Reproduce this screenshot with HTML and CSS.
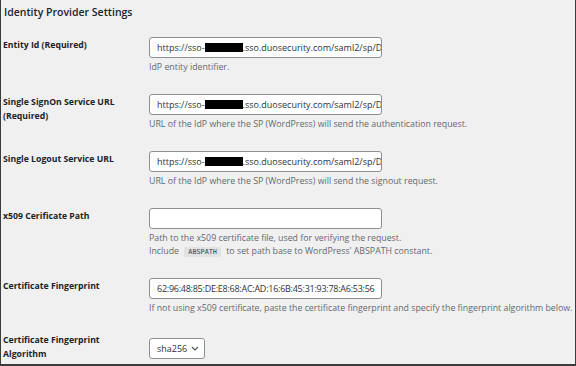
FILE: index.html
```html
<!DOCTYPE html>
<html lang="en">
<head>
    <meta charset="UTF-8">
    <meta name="viewport" content="width=device-width, initial-scale=1.0">
    <title>Identity Provider Settings</title>
    <link rel="stylesheet" href="styles.css">
</head>
<body>
    <div class="frame">
        <h2 class="section-title">Identity Provider Settings</h2>

        <div class="form-table">
            <div class="form-row">
                <div class="form-label">Entity Id (Required)</div>
                <div class="form-field">
                    <div class="text-input">https://sso-<span class="redacted"></span>.sso.duosecurity.com/saml2/sp/D</div>
                    <p class="description">IdP entity identifier.</p>
                </div>
            </div>

            <div class="form-row">
                <div class="form-label">Single SignOn Service URL (Required)</div>
                <div class="form-field">
                    <div class="text-input">https://sso-<span class="redacted"></span>.sso.duosecurity.com/saml2/sp/D</div>
                    <p class="description">URL of the IdP where the SP (WordPress) will send the authentication request.</p>
                </div>
            </div>

            <div class="form-row">
                <div class="form-label">Single Logout Service URL</div>
                <div class="form-field">
                    <div class="text-input">https://sso-<span class="redacted"></span>.sso.duosecurity.com/saml2/sp/D</div>
                    <p class="description">URL of the IdP where the SP (WordPress) will send the signout request.</p>
                </div>
            </div>

            <div class="form-row">
                <div class="form-label">x509 Cerificate Path</div>
                <div class="form-field">
                    <div class="text-input"></div>
                    <p class="description">Path to the x509 certificate file, used for verifying the request.<br>
                        Include <code>ABSPATH</code> to set path base to WordPress' ABSPATH constant.</p>
                </div>
            </div>

            <div class="form-row">
                <div class="form-label">Certificate Fingerprint</div>
                <div class="form-field">
                    <div class="text-input fingerprint">62:96:48:85:DE:E8:68:AC:AD:16:6B:45:31:93:78:A6:53:56</div>
                    <p class="description nowrap">If not using x509 certificate, paste the certificate fingerprint and specify the fingerprint algorithm below.</p>
                </div>
            </div>

            <div class="form-row last">
                <div class="form-label">Certificate Fingerprint Algorithm</div>
                <div class="form-field">
                    <div class="select-input">
                        <span>sha256</span>
                        <svg class="chevron" width="8" height="5" viewBox="0 0 8 5">
                            <path d="M1 1l3 3 3-3" fill="none" stroke="#50575e" stroke-width="1.2"/>
                        </svg>
                    </div>
                </div>
            </div>
        </div>
    </div>
</body>
</html>
```

FILE: styles.css
```css
/* WordPress admin settings, at screenshot scale */
html, body {
    margin: 0;
    padding: 0;
}

body {
    background-color: #f0f0f1;
    color: #1d2327;
    font-family: "Open Sans", "Noto Sans", sans-serif;
}

.frame {
    height: 366px;
    box-sizing: border-box;
    border: 1px solid #3c3c3c;
    border-top: none;
    border-bottom-width: 2px;
    padding-left: 2px;
    overflow: hidden;
}

.section-title {
    margin: 0;
    padding: 5px 0 0 1px;
    height: 22px;
    font-size: 10.5px;
    font-weight: 600;
    line-height: 15px;
    color: #1d2327;
}

/* Rows */
.form-row {
    display: flex;
    align-items: flex-start;
}

.form-label {
    width: 136px;
    padding: 11px 10px 10px 0;
    font-size: 8.7px;
    font-weight: 700;
    line-height: 14px;
}

.form-row.last .form-label {
    padding-top: 8px;
}

.form-field {
    flex: 1;
    min-width: 0;
    padding: 10px 0;
}

.text-input {
    width: 233px;
    height: 21px;
    box-sizing: border-box;
    border: 1px solid #8c8f94;
    border-radius: 3px;
    background-color: #fff;
    padding: 0 7px;
    font-size: 9px;
    line-height: 19px;
    color: #2c3338;
    white-space: nowrap;
    overflow: hidden;
}

.text-input.fingerprint {
    letter-spacing: -0.25px;
}

.redacted {
    display: inline-block;
    width: 38px;
    height: 9px;
    background-color: #000;
    vertical-align: -1px;
}

.description {
    margin: 3px 0 0;
    font-size: 8.8px;
    line-height: 13px;
    color: #646970;
}

.nowrap {
    white-space: nowrap;
}

code {
    display: inline-block;
    margin: 1px 3px;
    padding: 1px 4px 0;
    background-color: #e2e2e3;
    font-family: "DejaVu Sans Mono", monospace;
    font-size: 6.8px;
    line-height: 9px;
    color: #3c434a;
}

.select-input {
    display: inline-flex;
    align-items: center;
    gap: 4px;
    height: 21px;
    box-sizing: border-box;
    border: 1px solid #8c8f94;
    border-radius: 3px;
    background-color: #fff;
    padding: 0 5px 0 7px;
    font-size: 9px;
    color: #2c3338;
}
```
